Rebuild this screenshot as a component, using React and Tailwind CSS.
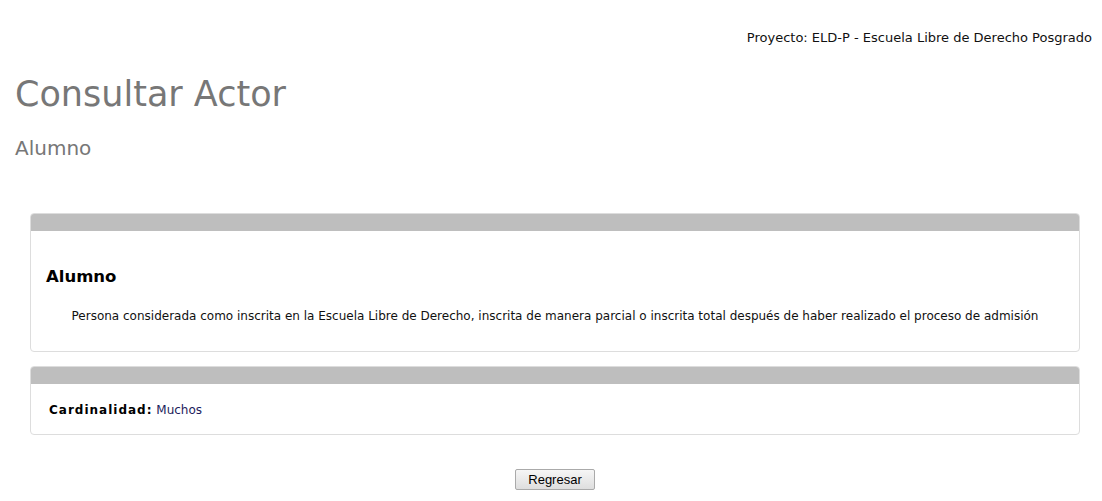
export default function App() {
  return (
    <div className="min-h-[501px] bg-white font-['DejaVu_Sans',Verdana,sans-serif] text-[#222]">
      <div className="flex justify-end px-[10px] pt-[28px] text-[13px] text-[#111]">
        Proyecto: ELD-P - Escuela Libre de Derecho Posgrado
      </div>

      <div className="px-[15px]">
        <h1 className="mt-[24px] text-[35px] leading-[44px] text-[#777]">Consultar Actor</h1>
        <h2 className="mt-[20px] text-[20px] leading-[24px] text-[#777]">Alumno</h2>
      </div>

      <div className="pl-[30px] pr-[22px]">
        <div className="mt-[53px] flex flex-col gap-[14px]">
          {/* Descripción */}
          <div className="overflow-hidden rounded-[4px] border border-[#ddd]">
            <div className="h-[17px] bg-[#bebebe]" />
            <div className="px-[15px] pb-[27px] pt-[35px]">
              <h3 className="text-[16.5px] font-bold leading-[22px] text-black">Alumno</h3>
              <p className="mt-[20px] text-center text-[12px] leading-[16px] text-[#111]">
                Persona considerada como inscrita en la Escuela Libre de Derecho, inscrita de manera parcial o inscrita total después de haber realizado el proceso de admisión
              </p>
            </div>
          </div>

          {/* Cardinalidad */}
          <div className="overflow-hidden rounded-[4px] border border-[#ddd]">
            <div className="h-[17px] bg-[#bebebe]" />
            <div className="px-[18px] pb-[16px] pt-[18px] text-[12px] leading-[16px]">
              <span className="font-bold tracking-[1px] text-black">Cardinalidad:</span>{" "}
              <span className="text-[#1c1c5c]">Muchos</span>
            </div>
          </div>
        </div>

        <div className="mt-[34px] flex justify-center">
          <button className="h-[21px] w-[80px] rounded-[2px] border border-[#aaa] bg-gradient-to-b from-[#f6f6f6] to-[#dedede] font-['Liberation_Sans',Arial,sans-serif] text-[13px] text-black">
            Regresar
          </button>
        </div>
      </div>
    </div>
  );
}
